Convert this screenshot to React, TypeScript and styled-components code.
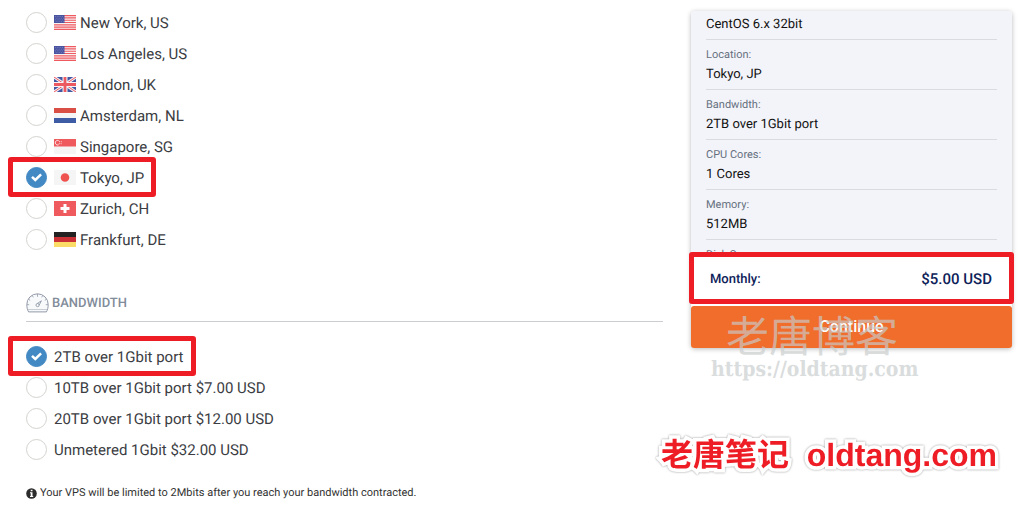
import React, { useState } from "react";
import styled, { createGlobalStyle } from "styled-components";

const GlobalStyle = createGlobalStyle`
  * { box-sizing: border-box; }
  body {
    margin: 0;
    background: #fff;
    color: #3b3d43;
    font-family: Roboto, "Noto Sans CJK SC", sans-serif;
    font-size: 15px;
    text-rendering: geometricPrecision;
  }
`;

const Page = styled.div`
  position: relative;
  display: grid;
  grid-template-columns: minmax(0, 1fr) 321px;
  gap: 28px;
  padding: 7px 12px 8px 26px;
`;

const Options = styled.main`
  min-width: 0;
`;

const Group = styled.fieldset`
  margin: 0;
  padding: 0;
  border: 0;
  min-width: 0;
`;

const GroupTitle = styled.h2`
  display: flex;
  align-items: center;
  gap: 3px;
  height: 37px;
  margin: 30px 0 19px;
  border-bottom: 1px solid #cccdd0;
  color: #828c9a;
  font-size: 13px;
  font-weight: 500;
`;

const OptionRow = styled.div`
  display: flex;
  height: 31px;
`;

const OptionLabel = styled.label`
  position: relative;
  display: flex;
  align-items: center;
  cursor: pointer;
  white-space: nowrap;
`;

const Radio = styled.input`
  appearance: none;
  flex: none;
  width: 21px;
  height: 21px;
  margin: 0 7px 0 0;
  border: 1px solid #d3d3cf;
  border-radius: 50%;
  background: #fff;
  &:checked {
    border-color: #4389c3;
    background: #4389c3
      url("data:image/svg+xml,%3Csvg xmlns='http://www.w3.org/2000/svg' viewBox='0 0 19 19'%3E%3Cpath d='M5 8.8l3.3 3.2 5.8-5.6' fill='none' stroke='white' stroke-width='2.5'/%3E%3C/svg%3E")
      center / 19px 19px no-repeat;
  }
`;

const FlagSvg = styled.svg`
  flex: none;
  width: 22px;
  height: 15px;
  margin-right: 4px;
`;

const Highlight = styled.span<{ $inset: string }>`
  position: absolute;
  inset: ${(p) => p.$inset};
  border: 5px solid #ee1c25;
  border-radius: 3px;
  pointer-events: none;
`;

const Note = styled.p`
  display: flex;
  align-items: center;
  gap: 3px;
  margin: 18px 0 0;
  color: #333;
  font-size: 11px;
  line-height: 20px;
`;

const Sidebar = styled.aside`
  padding-top: 4px;
`;

const Checkout = styled.div`
  position: relative;
  border-radius: 4px;
  box-shadow: 0 1px 5px rgba(0, 0, 0, 0.28);
`;

const Summary = styled.dl`
  max-height: 244px;
  margin: 0;
  padding: 4px 15px 0;
  overflow: hidden;
  border-radius: 4px 4px 0 0;
  background: #f3f4f9;
`;

const SummaryItem = styled.div`
  padding: 5px 0 4px;
  border-bottom: 1px solid #d9dbe0;
  &:first-child { padding-top: 0; }
`;

const Term = styled.dt`
  margin-bottom: 1px;
  color: #66707f;
  font-size: 11px;
  line-height: 19px;
`;

const Value = styled.dd`
  margin: 0;
  color: #111;
  font-size: 13px;
  line-height: 20px;
`;

const Total = styled.div`
  position: relative;
  display: flex;
  align-items: center;
  justify-content: space-between;
  height: 51px;
  padding: 0 20px 3px 19px;
  background: #fff;
  color: #0d2259;
  font-size: 13px;
  font-weight: 500;
`;

const Price = styled.span`
  font-size: 15px;
`;

const Continue = styled.button`
  display: block;
  width: 100%;
  height: 42px;
  padding: 0;
  border: 0;
  border-radius: 3px;
  background: #f06d2c;
  color: #fff;
  font: 500 16px/42px Roboto, sans-serif;
  cursor: pointer;
`;

const Watermark = styled.div`
  position: absolute;
  left: 20px;
  bottom: -34px;
  color: rgba(200, 204, 204, 0.68);
  white-space: nowrap;
  pointer-events: none;
`;

const WatermarkTitle = styled.div`
  padding-left: 15px;
  font: 43px/44px "Noto Sans CJK SC", sans-serif;
`;

const WatermarkUrl = styled.div`
  font: bold 21px/26px "DejaVu Serif Condensed", "DejaVu Serif", serif;
`;

const Signature = styled.div`
  position: absolute;
  right: 27px;
  bottom: 32px;
  color: #ee1c25;
  font: bold 32px/48px "Liberation Sans", "Noto Sans CJK SC", sans-serif;
  white-space: pre;
  -webkit-text-stroke: 7px #fff;
  stroke-linejoin: round;
  paint-order: stroke fill;
  filter: drop-shadow(0 0 1px rgba(0, 0, 0, 0.4));
`;

type Country = "us" | "uk" | "nl" | "sg" | "jp" | "ch" | "de";

const flags: Record<Country, React.ReactNode> = {
  us: (
    <>
      <path fill="#f8f1f2" d="M0 0h22v15H0z" />
      <path stroke="#ee5a60" strokeWidth="1.15" d="M0 .6h22M0 2.9h22M0 5.2h22M0 7.5h22M0 9.8h22M0 12.1h22M0 14.4h22" />
      <path fill="#4953a0" d="M0 0h10.5v8H0z" />
      <path stroke="#8d94c6" strokeWidth=".7" strokeDasharray=".8 1" d="M1 1.5h9M1.8 3.2h8M1 4.9h9M1.8 6.6h8" />
    </>
  ),
  uk: (
    <>
      <path fill="#4357a2" d="M0 0h22v15H0z" />
      <path stroke="#f6f3f6" strokeWidth="3" d="M0 0l22 15M22 0L0 15" />
      <path stroke="#ec5960" strokeWidth="1" d="M0 0l22 15M22 0L0 15" />
      <path stroke="#f6f3f6" strokeWidth="5" d="M11 0v15M0 7.5h22" />
      <path stroke="#ec5960" strokeWidth="2.8" d="M11 0v15M0 7.5h22" />
    </>
  ),
  nl: (
    <>
      <path fill="#f5f5f5" d="M0 0h22v15H0z" />
      <path fill="#d94f46" d="M0 0h22v5H0z" />
      <path fill="#3e5ba6" d="M0 10h22v5H0z" />
    </>
  ),
  sg: (
    <>
      <path fill="#f5f5f5" d="M0 0h22v15H0z" />
      <path fill="#ee5a5e" d="M0 0h22v7.5H0z" />
      <path fill="none" stroke="#fff" strokeWidth=".9" d="M4.6 1.6a2.3 2.3 0 1 0 0 4.2" />
      <path stroke="#fbd5d6" strokeWidth="1" strokeDasharray="1 .8" d="M5 2.7h3M4.8 4.7h3.2" />
    </>
  ),
  jp: (
    <>
      <path fill="#f5f5f5" d="M0 0h22v15H0z" />
      <circle cx="11" cy="7.5" r="4.3" fill="#ef5350" />
    </>
  ),
  ch: (
    <>
      <path fill="#ee5a5e" d="M0 0h22v15H0z" />
      <path stroke="#fff" strokeWidth="3" d="M11 3v9M6.5 7.5h9" />
    </>
  ),
  de: (
    <>
      <path fill="#222" d="M0 0h22v5H0z" />
      <path fill="#c93036" d="M0 5h22v5H0z" />
      <path fill="#fbdc66" d="M0 10h22v5H0z" />
    </>
  ),
};

const GaugeIcon = () => (
  <svg width="23" height="20" viewBox="0 0 23 20" fill="none" stroke="#9199a7" aria-hidden="true">
    <path fill="#f8f9fb" strokeWidth="1" d="M2.6 18.9C1.4 17 .8 14.400.8 11.700A10.7 10.7 0 0 1 11.500.8a10.700 10.700 0 0 1 10.700 10.900c0 2.700-.6 5.300-1.800 7.200z" />
    <path strokeWidth=".8" d="M11.500 1v2.800M6.300 2.400l1 1.900M16.700 2.400l-1 1.900M2.500 6.300l1.700 1M20.500 6.300l-1.700 1M1 11.700h2.200M22 11.700h-2.200" />
    <path stroke="#c3c8d0" strokeWidth=".9" d="M1.800 16.500h19.400" />
    <path strokeWidth=".9" d="M11.300 10.500l4.100-2.700-2.300 4.400" />
    <circle cx="11.600" cy="12.100" r="1.600" strokeWidth=".9" />
  </svg>
);

const InfoIcon = () => (
  <svg width="11" height="11" viewBox="0 0 11 11" aria-hidden="true">
    <circle cx="5.5" cy="5.5" r="5.3" fill="#2c2c2c" />
    <path fill="#fff" d="M4.7 1.7h1.8v1.6H4.7zM4 4.3h2.5v3.6h.7v1H4v-1h.7V5.3H4z" />
  </svg>
);

const locations: { name: string; flag: Country }[] = [
  { name: "New York, US", flag: "us" },
  { name: "Los Angeles, US", flag: "us" },
  { name: "London, UK", flag: "uk" },
  { name: "Amsterdam, NL", flag: "nl" },
  { name: "Singapore, SG", flag: "sg" },
  { name: "Tokyo, JP", flag: "jp" },
  { name: "Zurich, CH", flag: "ch" },
  { name: "Frankfurt, DE", flag: "de" },
];

const bandwidths = [
  { name: "2TB over 1Gbit port", price: "" },
  { name: "10TB over 1Gbit port", price: " $7.00 USD" },
  { name: "20TB over 1Gbit port", price: " $12.00 USD" },
  { name: "Unmetered 1Gbit", price: " $32.00 USD" },
];

export default function App() {
  const [location, setLocation] = useState("Tokyo, JP");
  const [bandwidth, setBandwidth] = useState("2TB over 1Gbit port");

  return (
    <>
      <GlobalStyle />
      <Page>
        <Options>
          <Group aria-label="Location">
            {locations.map(({ name, flag }) => (
              <OptionRow key={name}>
                <OptionLabel>
                  <Radio type="radio" name="location" checked={location === name} onChange={() => setLocation(name)} />
                  <FlagSvg viewBox="0 0 22 15" aria-hidden="true">{flags[flag]}</FlagSvg>
                  {name}
                  {name === "Tokyo, JP" && <Highlight $inset="-5px -12px -4px -18px" />}
                </OptionLabel>
              </OptionRow>
            ))}
          </Group>
          <GroupTitle id="bandwidth-title">
            <GaugeIcon />
            BANDWIDTH
          </GroupTitle>
          <Group aria-labelledby="bandwidth-title">
            {bandwidths.map(({ name, price }) => (
              <OptionRow key={name}>
                <OptionLabel>
                  <Radio type="radio" name="bandwidth" checked={bandwidth === name} onChange={() => setBandwidth(name)} />
                  <span>{name + price}</span>
                  {name === "2TB over 1Gbit port" && <Highlight $inset="-5px -12px -4px -18px" />}
                </OptionLabel>
              </OptionRow>
            ))}
          </Group>
          <Note>
            <InfoIcon />
            Your VPS will be limited to 2Mbits after you reach your bandwidth contracted.
          </Note>
        </Options>
        <Sidebar>
          <Checkout>
            <Summary>
              <SummaryItem>
                <Value>CentOS 6.x 32bit</Value>
              </SummaryItem>
              <SummaryItem>
                <Term>Location:</Term>
                <Value>{location}</Value>
              </SummaryItem>
              <SummaryItem>
                <Term>Bandwidth:</Term>
                <Value>{bandwidth}</Value>
              </SummaryItem>
              <SummaryItem>
                <Term>CPU Cores:</Term>
                <Value>1 Cores</Value>
              </SummaryItem>
              <SummaryItem>
                <Term>Memory:</Term>
                <Value>512MB</Value>
              </SummaryItem>
              <SummaryItem>
                <Term>Disk Space:</Term>
              </SummaryItem>
            </Summary>
            <Total>
              <span>Monthly:</span>
              <Price>$5.00 USD</Price>
              <Highlight $inset="-3px -2px 2px -2px" />
            </Total>
            <Continue type="button">Continue</Continue>
            <Watermark>
              <WatermarkTitle>老唐博客</WatermarkTitle>
              <WatermarkUrl>https://oldtang.com</WatermarkUrl>
            </Watermark>
          </Checkout>
        </Sidebar>
        <Signature>老唐笔记  oldtang.com</Signature>
      </Page>
    </>
  );
}
